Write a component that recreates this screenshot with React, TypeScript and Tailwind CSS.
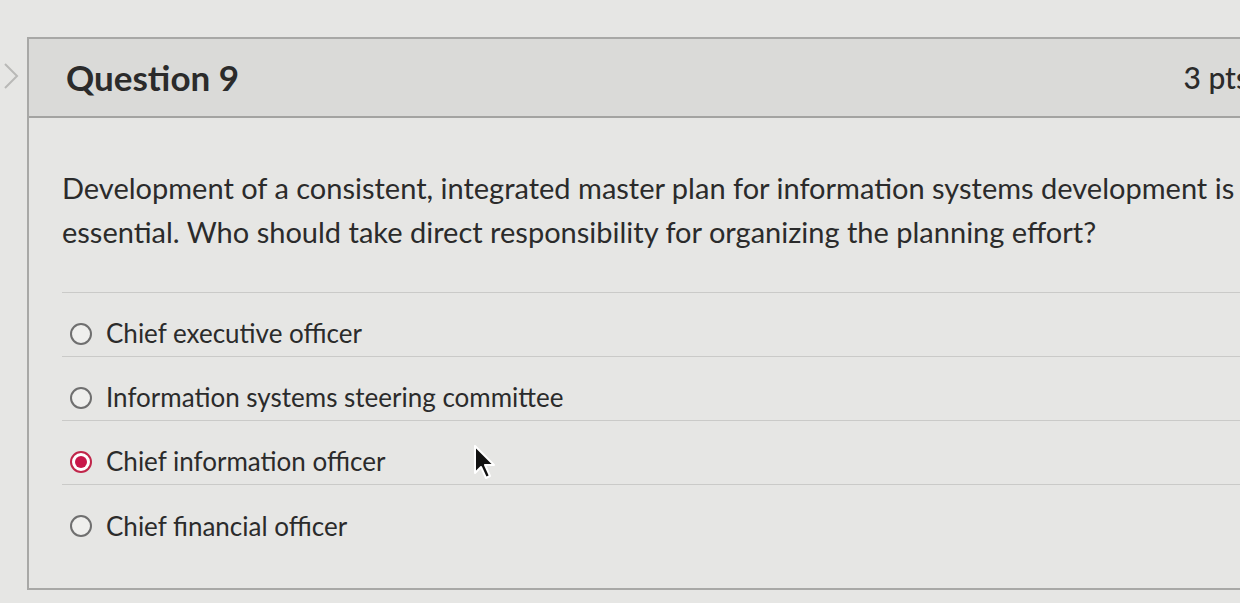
import React from 'react';

const options = [
  { label: 'Chief executive officer', selected: false },
  { label: 'Information systems steering committee', selected: false },
  { label: 'Chief information officer', selected: true },
  { label: 'Chief financial officer', selected: false },
];

const Radio: React.FC<{ selected: boolean }> = ({ selected }) =>
  selected ? (
    <span className="flex h-[22px] w-[22px] shrink-0 items-center justify-center rounded-full border-2 border-[#c0264a] bg-white">
      <span className="h-[12px] w-[12px] rounded-full bg-[#c8174a]" />
    </span>
  ) : (
    <span className="h-[22px] w-[22px] shrink-0 rounded-full border-2 border-[#6f6f6f] bg-[#efefed]" />
  );

export default function App() {
  return (
    <div
      className="relative flex h-[603px] w-[1240px] overflow-hidden bg-[#e6e6e4] pt-[37px] text-[#2b2b2b]"
      style={{ fontFamily: 'Lato, "Open Sans", sans-serif' }}
    >
      {/* collapse chevron */}
      <div className="w-[27px] shrink-0 pt-[24px]">
        <svg width="22" height="30" viewBox="0 0 22 30" fill="none">
          <path d="M5 3 L17 15 L5 27" stroke="#b9b9b7" strokeWidth="2" />
        </svg>
      </div>

      <div className="h-[553px] w-[1240px] shrink-0 border-l-2 border-t-2 border-b-2 border-[#a8a8a6]">
        {/* Header */}
        <div className="flex h-[79px] items-center justify-between border-b-2 border-[#a3a3a1] bg-[#dadad8] pl-[37px] pr-[18px]">
          <h2 className="text-[35px] font-bold">Question 9</h2>
          <span className="text-[30px] font-medium">3 pts</span>
        </div>

        {/* Body */}
        <div className="pl-[33px] pt-[48px]">
          <p className="whitespace-nowrap text-[29px] leading-[44px]">
            Development of a consistent, integrated master plan for information systems development is
            <br />
            essential. Who should take direct responsibility for organizing the planning effort?
          </p>

          <div className="mt-[38px] border-t border-[#cacac8]">
            {options.map((o, i) => (
              <div
                key={o.label}
                className={`flex h-[64px] items-center gap-[14px] pl-[8px] pt-[18px] ${i < options.length - 1 ? 'border-b border-[#cacac8]' : ''}`}
              >
                <Radio selected={o.selected} />
                <span className="text-[26px]">{o.label}</span>
              </div>
            ))}
          </div>
        </div>
      </div>

      {/* mouse cursor */}
      <svg className="absolute left-[472px] top-[444px]" width="26" height="38" viewBox="0 0 26 38">
        <path d="M3 2 L3 29 L9 23 L14 34 L18 32 L13 21 L22 21 Z" fill="#111" stroke="#fff" strokeWidth="2" strokeLinejoin="round" />
      </svg>
    </div>
  );
}
